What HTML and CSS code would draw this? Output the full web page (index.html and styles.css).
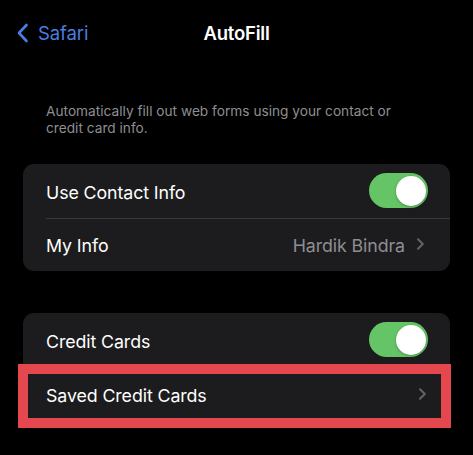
FILE: index.html
```html
<!DOCTYPE html>
<html>
<head>
<meta charset="utf-8">
<link rel="stylesheet" href="styles.css">
</head>
<body>
<div class="screen">
  <header class="nav">
    <div class="back">
      <svg class="back-icon" width="13" height="20" viewBox="0 0 13 20"><path d="M10.5 2 L3 10 L10.5 18" fill="none" stroke="#4a7fe0" stroke-width="2.6" stroke-linecap="round" stroke-linejoin="round"/></svg>
      <span class="back-label">Safari</span>
    </div>
    <div class="title">AutoFill</div>
    <div class="spacer"></div>
  </header>

  <p class="desc">Automatically fill out web forms using your contact or credit card info.</p>

  <section class="card card-first">
    <div class="row">
      <span class="label">Use Contact Info</span>
      <span class="toggle"><span class="knob"></span></span>
    </div>
    <div class="row row-sep">
      <span class="label">My Info</span>
      <span class="value">Hardik Bindra</span>
      <svg class="chev" width="9" height="12" viewBox="0 0 9 12"><path d="M2 1.2 L6.8 6 L2 10.8" fill="none" stroke="#636366" stroke-width="2" stroke-linecap="round" stroke-linejoin="round"/></svg>
    </div>
  </section>

  <section class="card card-second">
    <div class="row">
      <span class="label">Credit Cards</span>
      <span class="toggle"><span class="knob"></span></span>
    </div>
    <div class="row row-highlight">
      <span class="label">Saved Credit Cards</span>
      <svg class="chev chev-solo" width="9" height="12" viewBox="0 0 9 12"><path d="M2 1.2 L6.8 6 L2 10.8" fill="none" stroke="#636366" stroke-width="2" stroke-linecap="round" stroke-linejoin="round"/></svg>
    </div>
  </section>
</div>
</body>
</html>
```

FILE: styles.css
```css
* { box-sizing: border-box; }
html, body {
  margin: 0;
  padding: 0;
  background: #000;
}
.screen {
  width: 473px;
  height: 455px;
  overflow: hidden;
  background: #000;
  font-family: Inter, "Noto Sans", "Liberation Sans", sans-serif;
  color: #fff;
}
.nav {
  height: 66px;
  display: grid;
  grid-template-columns: 1fr auto 1fr;
  align-items: center;
  padding: 0 16px;
}
.back {
  display: flex;
  align-items: center;
  gap: 9px;
}
.back-icon { display: block; }
.back-label {
  color: #4a7fe0;
  font-size: 18.5px;
  letter-spacing: -0.1px;
}
.title {
  font-size: 18.5px;
  font-weight: 600;
  letter-spacing: -0.2px;
}
.desc {
  margin: 37px 0 0;
  padding: 0 80px 0 46px;
  font-size: 13.7px;
  line-height: 17px;
  color: #8e8e93;
  letter-spacing: 0;
}
.card {
  margin: 0 23px;
  background: #1c1c1e;
  border-radius: 11px;
}
.card-first { margin-top: 27px; }
.card-second { margin-top: 42px; border-radius: 11px 11px 0 0; }
.row {
  position: relative;
  height: 53.5px;
  display: flex;
  align-items: center;
  padding: 0 22px 0 23px;
}
.row-sep::before {
  content: "";
  position: absolute;
  top: 0;
  left: 23px;
  right: 0;
  height: 1px;
  background: #38383a;
}
.label {
  flex: 1;
  font-size: 17.8px;
  letter-spacing: -0.1px;
  padding-top: 3px;
}
.value {
  font-size: 17.8px;
  color: #8e8e93;
  margin-right: 11px;
  letter-spacing: -0.1px;
  padding-top: 3px;
}
.chev { display: block; margin-right: 3px; }
.chev-solo { margin-right: 1px; }
.toggle {
  width: 59px;
  height: 35px;
  border-radius: 18px;
  background: #65c466;
  display: flex;
  align-items: center;
  justify-content: flex-end;
  padding: 0 2.5px;
}
.knob {
  width: 30px;
  height: 30px;
  border-radius: 50%;
  background: #fff;
  box-shadow: 0 1px 3px rgba(0,0,0,0.25);
}
.row-highlight {
  height: 54px;
}
.row-highlight::after {
  content: "";
  position: absolute;
  top: -3px;
  left: -5px;
  right: -1px;
  bottom: -7px;
  border: 10px solid #e5474f;
  pointer-events: none;
}
```
